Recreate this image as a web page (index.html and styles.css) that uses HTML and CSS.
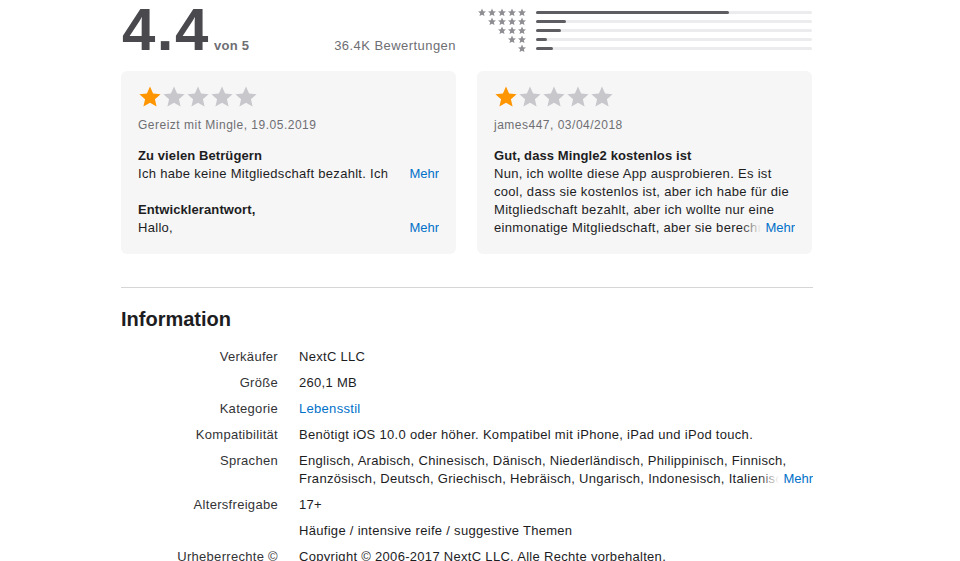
FILE: index.html
```html
<!DOCTYPE html>
<html lang="de">
<head>
    <meta charset="utf-8">
    <title>Mingle2 - Bewertungen und Informationen</title>
    <link rel="stylesheet" href="styles.css">
</head>
<body>
    <svg class="defs" width="0" height="0">
        <symbol id="star" viewBox="0 0 24 24">
            <path d="M12 1.6l3.1 6.9 7.5.7-5.7 5 1.7 7.4L12 17.7l-6.6 3.9 1.7-7.4-5.7-5 7.5-.7z"/>
        </symbol>
    </svg>

    <main class="page">
        <section class="ratings">
            <div class="score">
                <span class="score-value">4.4</span>
                <span class="score-of">von 5</span>
                <span class="score-count">36.4K Bewertungen</span>
            </div>

            <div class="histogram">
                <div class="hist-row">
                    <span class="hist-stars"><svg><use href="#star"/></svg><svg><use href="#star"/></svg><svg><use href="#star"/></svg><svg><use href="#star"/></svg><svg><use href="#star"/></svg></span>
                    <span class="hist-bar"><span class="hist-fill" style="width: 70%"></span></span>
                </div>
                <div class="hist-row">
                    <span class="hist-stars"><svg><use href="#star"/></svg><svg><use href="#star"/></svg><svg><use href="#star"/></svg><svg><use href="#star"/></svg></span>
                    <span class="hist-bar"><span class="hist-fill" style="width: 11%"></span></span>
                </div>
                <div class="hist-row">
                    <span class="hist-stars"><svg><use href="#star"/></svg><svg><use href="#star"/></svg><svg><use href="#star"/></svg></span>
                    <span class="hist-bar"><span class="hist-fill" style="width: 9%"></span></span>
                </div>
                <div class="hist-row">
                    <span class="hist-stars"><svg><use href="#star"/></svg><svg><use href="#star"/></svg></span>
                    <span class="hist-bar"><span class="hist-fill" style="width: 4%"></span></span>
                </div>
                <div class="hist-row">
                    <span class="hist-stars"><svg><use href="#star"/></svg></span>
                    <span class="hist-bar"><span class="hist-fill" style="width: 6%"></span></span>
                </div>
            </div>
        </section>

        <section class="reviews">
            <article class="review">
                <div class="stars">
                    <svg class="on"><use href="#star"/></svg><svg><use href="#star"/></svg><svg><use href="#star"/></svg><svg><use href="#star"/></svg><svg><use href="#star"/></svg>
                </div>
                <p class="review-meta">Gereizt mit Mingle, 19.05.2019</p>
                <h3 class="review-title">Zu vielen Betrügern</h3>
                <div class="clamp clamp-1">
                    <p>Ich habe keine Mitgliedschaft bezahlt. Ich bekomme trotzdem ständig Nachrichten von falschen Profilen, die nur Geld wollen.</p>
                    <a class="more" href="#">Mehr</a>
                </div>
                <h3 class="review-title reply">Entwicklerantwort,</h3>
                <div class="clamp clamp-1">
                    <p>Hallo,</p>
                    <a class="more" href="#">Mehr</a>
                </div>
            </article>

            <article class="review">
                <div class="stars">
                    <svg class="on"><use href="#star"/></svg><svg><use href="#star"/></svg><svg><use href="#star"/></svg><svg><use href="#star"/></svg><svg><use href="#star"/></svg>
                </div>
                <p class="review-meta">james447, 03/04/2018</p>
                <h3 class="review-title">Gut, dass Mingle2 kostenlos ist</h3>
                <div class="clamp clamp-4">
                    <p>Nun, ich wollte diese App ausprobieren. Es ist cool, dass sie kostenlos ist, aber ich habe für die Mitgliedschaft bezahlt, aber ich wollte nur eine einmonatige Mitgliedschaft, aber sie berechnen mir jetzt jeden Monat.</p>
                    <a class="more" href="#">Mehr</a>
                </div>
            </article>
        </section>

        <section class="information">
            <h2>Information</h2>
            <dl class="info-list">
                <dt>Verkäufer</dt>
                <dd>NextC LLC</dd>

                <dt>Größe</dt>
                <dd>260,1 MB</dd>

                <dt>Kategorie</dt>
                <dd><a href="#">Lebensstil</a></dd>

                <dt>Kompatibilität</dt>
                <dd>Benötigt iOS 10.0 oder höher. Kompatibel mit iPhone, iPad und iPod touch.</dd>

                <dt>Sprachen</dt>
                <dd class="clamp clamp-2">
                    <p>Englisch, Arabisch, Chinesisch, Dänisch, Niederländisch, Philippinisch, Finnisch, Französisch, Deutsch, Griechisch, Hebräisch, Ungarisch, Indonesisch, Italienisch, Japanisch, Koreanisch, Norwegisch (Bokmål), Polnisch, Portugiesisch, Russisch, Spanisch, Schwedisch, Thai, Türkisch, Vietnamesisch</p>
                    <a class="more" href="#">Mehr</a>
                </dd>

                <dt>Altersfreigabe</dt>
                <dd>
                    <p>17+</p>
                    <p class="sub">Häufige / intensive reife / suggestive Themen</p>
                </dd>

                <dt>Urheberrechte ©</dt>
                <dd>Copyright © 2006-2017 NextC LLC. Alle Rechte vorbehalten.</dd>
            </dl>
        </section>
    </main>
</body>
</html>
```

FILE: styles.css
```css
body {
    margin: 0;
    font-family: "Liberation Sans", Arial, sans-serif;
    color: #1d1d1f;
    background: #fff;
}
p, h2, h3, dl, dd {
    margin: 0;
}
a {
    color: #0070c9;
    text-decoration: none;
}
.defs {
    position: absolute;
}
.page {
    width: 692px;
    margin-left: 121px;
}

/* rating summary */
.ratings {
    display: grid;
    grid-template-columns: 335px 335px;
    column-gap: 21px;
}
.score {
    display: flex;
    align-items: baseline;
    height: 60px;
}
.score-value {
    margin-left: 1px;
    font-size: 60px;
    line-height: 60px;
    font-weight: bold;
    letter-spacing: 1.5px;
    color: #4a4a4e;
}
.score-of {
    margin-left: 4px;
    font-size: 13px;
    font-weight: bold;
    letter-spacing: 0.3px;
    color: #6e6e73;
}
.score-count {
    margin-left: auto;
    font-size: 13px;
    letter-spacing: 0.45px;
    color: #6e6e73;
}
.histogram {
    padding-top: 8px;
}
.hist-row {
    display: flex;
    align-items: center;
    height: 9px;
}
.hist-stars {
    display: flex;
    justify-content: flex-end;
    width: 50px;
    fill: #8e8e93;
}
.hist-stars svg {
    width: 10px;
    height: 9px;
}
.hist-bar {
    flex: 1;
    height: 3px;
    margin-left: 9px;
    background: #ececee;
    border-radius: 2px;
}
.hist-fill {
    display: block;
    height: 3px;
    background: #5e5e62;
    border-radius: 2px;
}

/* review cards */
.reviews {
    display: grid;
    grid-template-columns: 335px 335px;
    column-gap: 21px;
    margin-top: 11px;
}
.review {
    background: #f6f6f6;
    border-radius: 6px;
    padding: 14px 17px 17px 17px;
}
.stars {
    display: flex;
    height: 24px;
    fill: #c7c7cc;
}
.stars svg {
    width: 24px;
    height: 24px;
}
.stars .on {
    fill: #ff9500;
}
.review-meta {
    margin-top: 7px;
    font-size: 12px;
    line-height: 18px;
    letter-spacing: 0.5px;
    color: #6e6e73;
}
.review-title {
    margin-top: 13px;
    font-size: 13px;
    line-height: 18px;
    font-weight: bold;
    letter-spacing: 0.1px;
}
.review-title.reply {
    margin-top: 18px;
}
.clamp {
    position: relative;
    overflow: hidden;
    font-size: 13px;
    line-height: 18px;
    letter-spacing: 0.3px;
}
.clamp-1 { max-height: 18px; }
.clamp-2 { max-height: 36px; }
.clamp-4 { max-height: 72px; }
.more {
    position: absolute;
    right: 0;
    bottom: 0;
    padding-left: 24px;
    letter-spacing: 0;
    background: linear-gradient(to right, rgba(246,246,246,0), #f6f6f6 20px);
}

/* information */
.information {
    margin-top: 33px;
    border-top: 1px solid #d6d6d6;
}
.information h2 {
    margin-top: 19px;
    font-size: 20px;
    line-height: 24px;
}
.info-list {
    display: grid;
    grid-template-columns: 157px 1fr;
    column-gap: 21px;
    row-gap: 8px;
    margin-top: 17px;
    font-size: 13px;
    line-height: 18px;
    letter-spacing: 0.3px;
}
.info-list dt {
    text-align: right;
    color: #333336;
}
.info-list .more {
    background: linear-gradient(to right, rgba(255,255,255,0), #fff 20px);
}
.info-list .sub {
    margin-top: 8px;
}
```
